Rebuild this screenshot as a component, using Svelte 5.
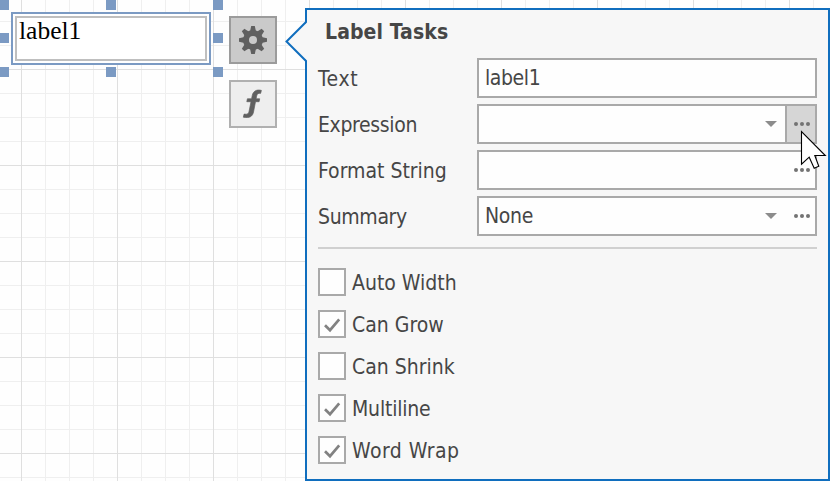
<script>
  const handles = [
    [-1, 0], [106, 0], [213, 0],
    [-1, 33], [213, 33],
    [-1, 67], [106, 67], [213, 67]
  ];
  const fields = [
    { label: 'Text', value: 'label1', ls: 0.6, vls: -0.4 },
    { label: 'Expression', value: '', drop: true, dots: true, active: true, ls: -0.35 },
    { label: 'Format String', value: '', dots: true, ls: 0 },
    { label: 'Summary', value: 'None', drop: true, dots: true, ls: -0.35, vls: -0.3 }
  ];
  const checks = [
    { label: 'Auto Width', on: false, ls: 0 },
    { label: 'Can Grow', on: true, ls: 0 },
    { label: 'Can Shrink', on: false, ls: 0 },
    { label: 'Multiline', on: true, ls: -0.2 },
    { label: 'Word Wrap', on: true, ls: 0.45 }
  ];
  const teeth = [0, 45, 90, 135, 180, 225, 270, 315];
</script>

<div class="surface">
  <div class="selection"><div class="control">label1</div></div>
  {#each handles as [x, y]}
    <i class="handle" style="left:{x}px;top:{y}px"></i>
  {/each}

  <div class="tools">
    <button class="tool active" aria-label="Tasks">
      <svg width="44" height="44" viewBox="0 0 44 44" fill="#606060">
        {#each teeth as a}
          <path d="M19 13.5 L20.2 8 H23.8 L25 13.5Z" transform="rotate({a} 22 22)" />
        {/each}
        <path fill-rule="evenodd" d="M22 12a10 10 0 1 0 0 20a10 10 0 1 0 0-20ZM22 18a4 4 0 1 1 0 8a4 4 0 1 1 0-8Z" />
      </svg>
    </button>
    <button class="tool" aria-label="Expressions">
      <svg width="44" height="44" viewBox="0 0 44 44" fill="#606060" stroke="#606060" stroke-width="0.7">
        <path d="M30.4 8.4L29.6 11.4C27.2 10.9 26 12 25.6 14.2L25.1 16.8H28.7L28.1 19.7H24.5L22.5 30C21.6 34.4 18.7 36.4 12.3 35.2L13.1 32.1C16.3 32.6 17.6 31.9 18.1 29.2L20 19.7H15.8L16.4 16.8H20.6L21.2 13.7C22.1 9 25.7 7.2 30.4 8.4Z" />
      </svg>
    </button>
  </div>

  <section class="panel">
    <svg class="pointer" width="24" height="42" viewBox="0 0 24 42">
      <path d="M24 1H21V3L2 21.5L21 40V41H24Z" fill="#f7f7f7" />
      <path d="M21 0V2L1.5 21.5L21 41V42" fill="none" stroke="#106ebe" stroke-width="2" />
    </svg>
    <h1>Label Tasks</h1>
    <div class="fields">
      {#each fields as f}
        <div class="row">
          <span class="name"><span style="letter-spacing:{f.ls}px">{f.label}</span></span>
          <div class="input">
            <span class="value" style="letter-spacing:{f.vls ?? 0}px">{f.value}</span>
            {#if f.drop}
              <svg class="arrow" width="12" height="6" viewBox="0 0 12 6"><path d="M0 0H12L6 6Z" fill="#8c8c8c" /></svg>
            {/if}
            {#if f.dots}
              <span class="more" class:active={f.active}>
                <svg width="16" height="4" viewBox="0 0 16 4" fill="#737373"><circle cx="2" cy="2" r="2" /><circle cx="8" cy="2" r="2" /><circle cx="14" cy="2" r="2" /></svg>
              </span>
            {/if}
          </div>
        </div>
      {/each}
    </div>
    <hr />
    <div class="checks">
      {#each checks as c}
        <div class="check">
          <span class="box">
            {#if c.on}
              <svg width="24" height="24" viewBox="0 0 24 24"><path d="M5 13.2L10 18.2L19.2 7.4" fill="none" stroke="#828282" stroke-width="2.7" /></svg>
            {/if}
          </span>
          <span class="caption" style="letter-spacing:{c.ls}px">{c.label}</span>
        </div>
      {/each}
    </div>
  </section>

  <svg class="cursor" width="28" height="40" viewBox="0 0 28 40">
    <path d="M1.5 1.5V34.2L9.2 27.2L14.2 38.2L18.8 36.2L14.8 25.5H25.3Z" fill="#fff" stroke="#000" stroke-width="1.1" />
  </svg>
</div>

<style>
  :global(body) { margin: 0; background: #fff; overflow: hidden; }
  .surface {
    position: relative;
    width: 830px;
    height: 481px;
    overflow: hidden;
    box-sizing: border-box;
    padding: 8px 0 0 229px;
    display: flex;
    align-items: flex-start;
    background-color: #fefefe;
    background-image:
      linear-gradient(90deg, #dfdfdf 1px, transparent 1px),
      linear-gradient(#dfdfdf 1px, transparent 1px),
      linear-gradient(90deg, #efefef 1px, transparent 1px),
      linear-gradient(#efefef 1px, transparent 1px);
    background-size: 96px 96px, 96px 96px, 24px 24px, 24px 24px;
    background-position: 21px 0, 0 69px, 21px 0, 0 21px;
    font-family: "DejaVu Sans Condensed", "DejaVu Sans", sans-serif;
    font-size: 21px;
    color: #464646;
  }
  .selection {
    position: absolute;
    left: 11px;
    top: 12px;
    width: 200px;
    height: 53px;
    box-sizing: border-box;
    border: 2px solid #7b9ac3;
    padding: 2px;
    background: #fff;
  }
  .control {
    height: 45px;
    box-sizing: border-box;
    border: 2px solid #bfbfbf;
    padding-left: 2px;
    font: 25.5px/26px "Liberation Serif", serif;
    color: #000;
  }
  .handle { position: absolute; width: 10px; height: 10px; background: #7b9ac3; }
  .tools { display: flex; flex-direction: column; gap: 16px; margin: 8px 28px 0 0; }
  .tool {
    width: 48px;
    height: 48px;
    padding: 0;
    border: 2px solid #b0b0b0;
    background: #eee;
    display: flex;
  }
  .tool.active { border-color: #9b9b9b; background: #cacaca; }
  .panel {
    position: relative;
    width: 525px;
    height: 473px;
    box-sizing: border-box;
    border: 2px solid #106ebe;
    background: #f7f7f7;
    padding: 0 11px;
  }
  .pointer { position: absolute; left: -22px; top: 10px; }
  h1 { margin: 0 0 0 7px; height: 48px; font-size: 21px; line-height: 44px; font-weight: bold; letter-spacing: 0.1px; white-space: nowrap; }
  .fields { display: flex; flex-direction: column; gap: 6px; }
  .row { display: flex; height: 40px; align-items: center; }
  .name { width: 159px; padding-top: 2px; white-space: nowrap; }
  .input {
    flex: 1;
    display: flex;
    align-items: center;
    height: 40px;
    box-sizing: border-box;
    border: 2px solid #a9a9a9;
    background: #fefefe;
  }
  .value { flex: 1; padding-left: 6px; }
  .arrow { margin-right: 8px; }
  .more {
    width: 30px;
    height: 36px;
    box-sizing: border-box;
    padding-left: 2px;
    display: flex;
    align-items: center;
    justify-content: center;
    border-left: 2px solid transparent;
  }
  .more.active { background: #d6d6d6; border-left-color: #a9a9a9; }
  hr { border: 0; height: 2px; background: #d0d0d0; margin: 11px 0 19px; }
  .checks { display: flex; flex-direction: column; gap: 14px; }
  .check { display: flex; align-items: center; gap: 6px; height: 28px; white-space: nowrap; }
  .caption { padding-top: 2px; }
  .box { width: 28px; height: 28px; box-sizing: border-box; border: 2px solid #a9a9a9; background: #fefefe; display: flex; }
  .cursor { position: absolute; left: 800px; top: 130px; }
</style>
